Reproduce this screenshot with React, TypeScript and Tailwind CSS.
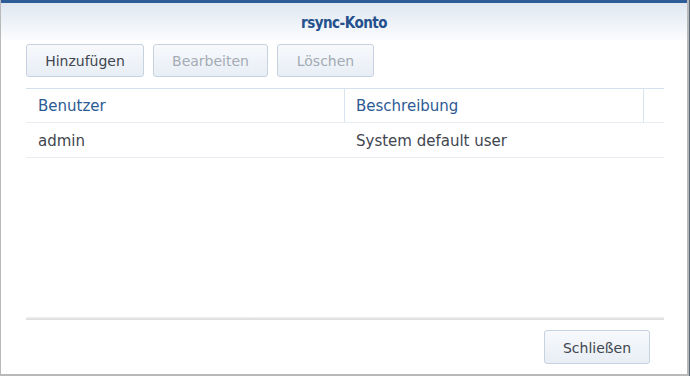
import React from "react";

function Btn({ children, disabled, className = "" }: { children: React.ReactNode; disabled?: boolean; className?: string }) {
  return (
    <button
      className={`h-[33px] pt-[2px] rounded-[3px] border border-[#c6d2df] bg-gradient-to-b from-[#f7f9fc] to-[#e8eef5] text-[14px] ${
        disabled ? "text-[#a3abb4]" : "text-[#3f4650]"
      } ${className}`}
    >
      {children}
    </button>
  );
}

export default function App() {
  return (
    <div className="w-[690px] h-[376px] bg-[#5a6b7d] overflow-hidden" style={{ fontFamily: '"DejaVu Sans", sans-serif' }}>
      <div className="w-[689px] h-[376px] bg-white border-l border-r-2 border-b-2 border-[#b9b9b9] flex flex-col">
        <div className="h-[3px] bg-[#2e5c96]" />
        <div className="h-[37px] pt-[3px] bg-gradient-to-b from-[#dfe7f1] to-[#fbfcfd] flex items-center justify-center">
          <span
            className="text-[15px] font-bold text-[#24508c] tracking-[-0.5px]"
            style={{ fontFamily: '"DejaVu Sans Condensed", "Liberation Sans", sans-serif' }}
          >
            rsync-Konto
          </span>
        </div>
        <div className="px-[25px] pt-[4px] flex gap-[9px]">
          <Btn className="w-[118px]">Hinzufügen</Btn>
          <Btn disabled className="w-[115px]">Bearbeiten</Btn>
          <Btn disabled className="w-[97px]">Löschen</Btn>
        </div>
        <div className="mx-[25px] mt-[11px] w-[638px] border-t border-[#d3e0ee]">
          <div className="flex h-[34px] border-b border-[#e6ecf2] text-[15px] text-[#2d5a94]">
            <div className="w-[319px] pl-[12px] pt-[2px] flex items-center border-r border-[#d8e4f0]">Benutzer</div>
            <div className="w-[299px] pl-[11px] pt-[2px] flex items-center border-r border-[#d8e4f0]">Beschreibung</div>
            <div className="flex-1" />
          </div>
          <div className="flex h-[35px] border-b border-[#e6ecf2] text-[15px] text-[#3f4650]">
            <div className="w-[319px] pl-[12px] pt-[2px] flex items-center">admin</div>
            <div className="pl-[11px] pt-[2px] flex items-center">System default user</div>
          </div>
        </div>
        <div className="flex-1" />
        <div className="mx-[25px] w-[638px] h-[3px] bg-gradient-to-b from-[#f0f0f0] to-[#dcdcdc]" />
        <div className="pr-[37px] pt-[10px] pb-[10px] flex justify-end">
          <Btn className="w-[106px] h-[34px]">Schließen</Btn>
        </div>
      </div>
    </div>
  );
}
